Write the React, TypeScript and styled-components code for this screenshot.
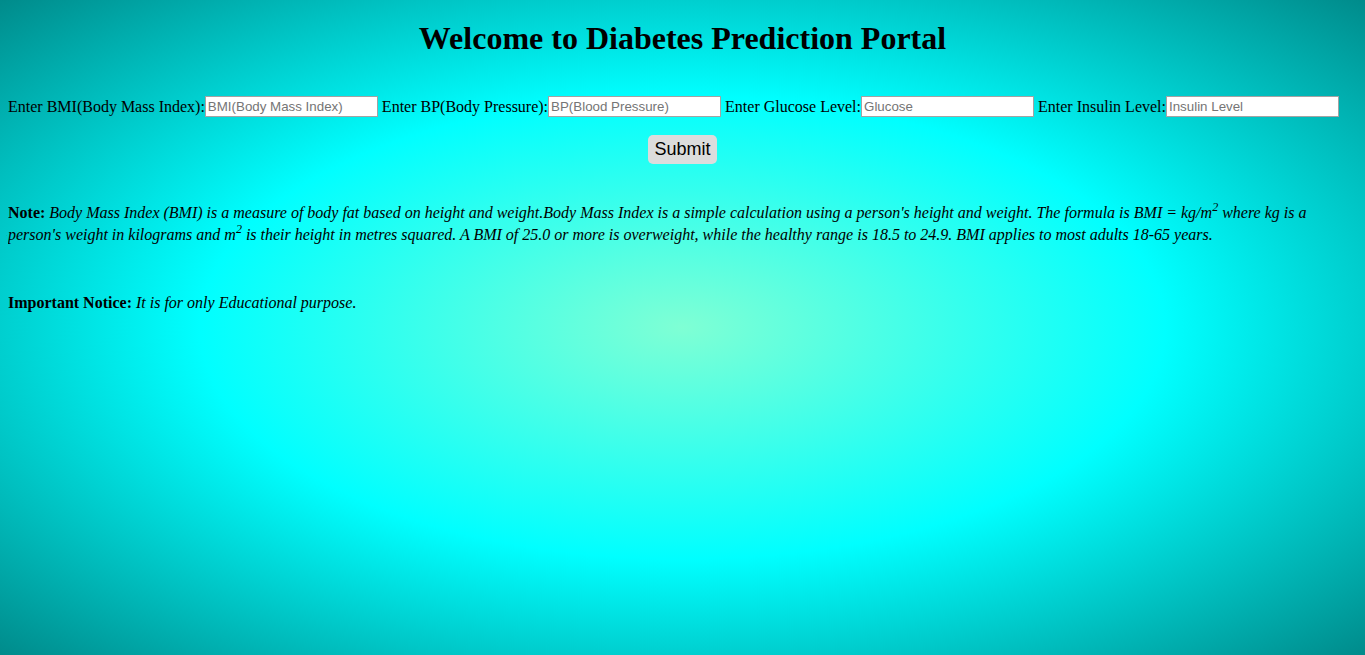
import React from "react";
import styled, { createGlobalStyle } from "styled-components";

const GlobalStyle = createGlobalStyle`
  html {
    min-height: 100%;
    height: 100%;
    background: radial-gradient(aquamarine, aqua, darkcyan);
  }
  body {
    margin: 8px;
    font-family: "Liberation Serif", "Times New Roman", serif;
    font-size: 16px;
    color: #000;
  }
`;

const Title = styled.h1`
  font-size: 32px;
  font-weight: bold;
  text-align: center;
  margin: 12px 0 0;
  line-height: 37px;
`;

const Form = styled.form`
  margin-top: 39px;
  display: flex;
  flex-direction: column;
  align-items: stretch;
`;

const FieldRow = styled.div`
  display: flex;
  align-items: center;
  gap: 4px;
  height: 21px;
`;

const Field = styled.label`
  display: flex;
  align-items: center;
  white-space: nowrap;
`;

const Input = styled.input`
  box-sizing: border-box;
  width: 173px;
  height: 21px;
  border: 1px solid #a3a3a3;
  padding: 1px 2px;
  font-family: "Liberation Sans", Arial, sans-serif;
  font-size: 13.33px;
  background: #fff;
  outline: none;
  &::placeholder {
    color: #757575;
  }
`;

const SubmitRow = styled.div`
  display: flex;
  justify-content: center;
  margin-top: 18px;
`;

const SubmitButton = styled.button`
  font-family: "Liberation Sans", Arial, sans-serif;
  font-size: 18px;
  padding: 3px 6px;
  height: 29px;
  border: none;
  border-radius: 5px;
  background: #dcdcdc;
  color: #000;
`;

const Paragraph = styled.p<{ $top: number }>`
  margin: ${(p) => p.$top}px 0 0;
  line-height: 22px;
  font-size: 16px;
`;

const Em = styled.i`
  font-style: italic;
`;

const Sup = styled.sup`
  font-size: 12px;
  line-height: 0;
  vertical-align: 7px;
`;

export default function App() {
  return (
    <>
      <GlobalStyle />
      <Title>Welcome to Diabetes Prediction Portal</Title>
      <Form onSubmit={(e) => e.preventDefault()}>
        <FieldRow>
          <Field>
            Enter BMI(Body Mass Index):
            <Input placeholder="BMI(Body Mass Index)" />
          </Field>
          <Field>
            Enter BP(Body Pressure):
            <Input placeholder="BP(Blood Pressure)" />
          </Field>
          <Field>
            Enter Glucose Level:
            <Input placeholder="Glucose" />
          </Field>
          <Field>
            Enter Insulin Level:
            <Input placeholder="Insulin Level" />
          </Field>
        </FieldRow>
        <SubmitRow>
          <SubmitButton type="submit">Submit</SubmitButton>
        </SubmitRow>
      </Form>
      <Paragraph $top={38}>
        <b>Note:</b>{" "}
        <Em>
          Body Mass Index (BMI) is a measure of body fat based on height and
          weight.Body Mass Index is a simple calculation using a person's height
          and weight. The formula is BMI = kg/m<Sup>2</Sup> where kg is a
          person's weight in kilograms and m<Sup>2</Sup> is their height in
          metres squared. A BMI of 25.0 or more is overweight, while the healthy
          range is 18.5 to 24.9. BMI applies to most adults 18-65 years.
        </Em>
      </Paragraph>
      <Paragraph $top={46}>
        <b>Important Notice:</b> <Em>It is for only Educational purpose.</Em>
      </Paragraph>
    </>
  );
}
